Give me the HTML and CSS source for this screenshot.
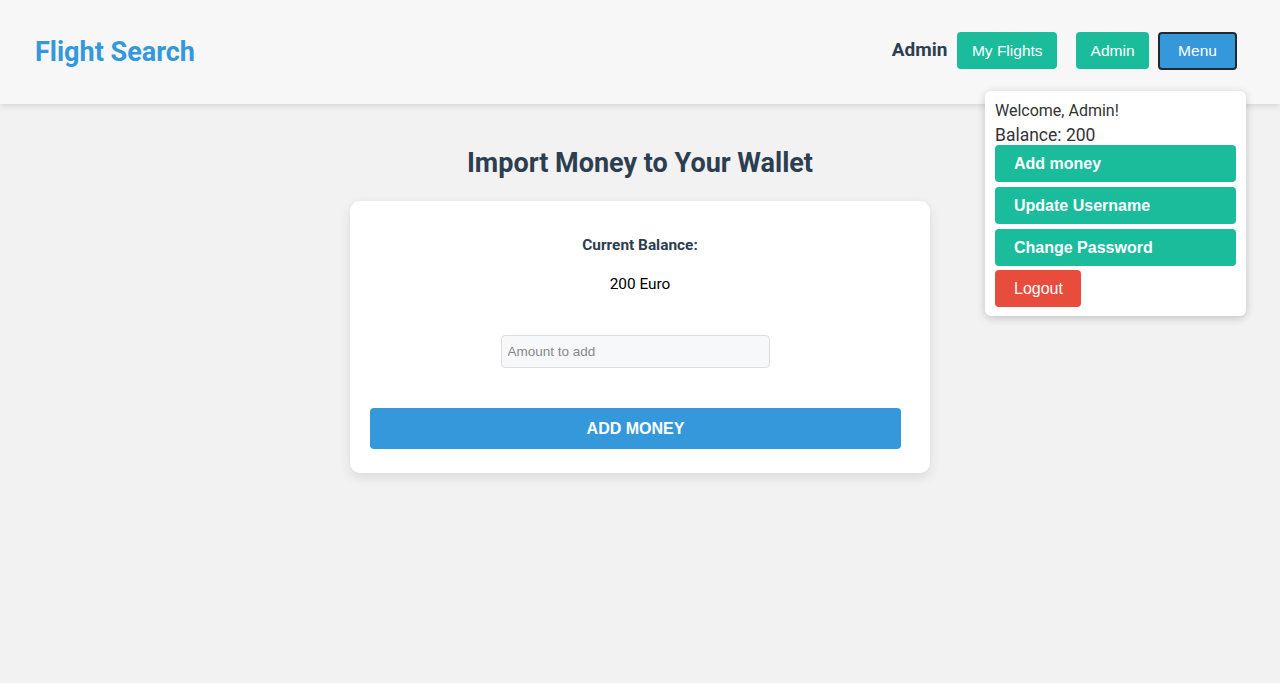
FILE: index.html
```html
<!DOCTYPE html>
<html>
<head>
<meta charset="utf-8">
<link rel="stylesheet" href="styles.css">
</head>
<body>
<header class="topbar">
  <div class="brand">Flight Search</div>
  <nav class="nav">
    <span class="nav-user">Admin</span>
    <button class="btn btn-green">My Flights</button>
    <button class="btn btn-green btn-admin">Admin</button>
    <button class="btn btn-menu">Menu</button>
  </nav>
  <div class="dropdown">
    <div class="dd-welcome">Welcome, Admin!</div>
    <div class="dd-balance">Balance: 200</div>
    <button class="dd-btn">Add money</button>
    <button class="dd-btn">Update Username</button>
    <button class="dd-btn">Change Password</button>
    <button class="dd-logout">Logout</button>
  </div>
</header>
<main class="main">
  <h1 class="title">Import Money to Your Wallet</h1>
  <section class="card">
    <div class="bal-label">Current Balance:</div>
    <div class="bal-value">200 Euro</div>
    <input class="amount" type="text" placeholder="Amount to add">
    <button class="add-btn">ADD MONEY</button>
  </section>
</main>
</body>
</html>
```
FILE: styles.css
```css
* { box-sizing: border-box; }
html, body { margin: 0; padding: 0; }
body {
  background: #f2f2f2;
  font-family: Roboto, "Liberation Sans", sans-serif;
  height: 683px;
  overflow: hidden;
}
.topbar {
  position: relative;
  height: 104px;
  background: #f7f7f7;
  box-shadow: 0 2px 6px rgba(0,0,0,0.12);
  display: flex;
  align-items: center;
  justify-content: space-between;
  padding: 0 43px 0 35px;
}
.brand {
  color: #3498db;
  font-weight: 700;
  font-size: 27px;
}
.nav {
  display: flex;
  align-items: center;
  margin-top: -3px;
}
.nav-user {
  font-weight: 700;
  font-size: 19px;
  color: #2c3e50;
  margin-right: 10px;
  margin-top: -2px;
}
.btn {
  font-family: "Liberation Sans", Arial, sans-serif;
  font-size: 15.5px;
  color: #fff;
  border: none;
  border-radius: 4px;
  height: 37px;
  padding: 0 14.5px;
}
.btn-green { background: #1abc9c; }
.btn-admin { margin-left: 19px; }
.btn-menu {
  margin-left: 9px;
  width: 79px;
  height: 38px;
  background: #3498db;
  border: 2px solid #1f2a33;
}
.dropdown {
  position: absolute;
  top: 91px;
  right: 34px;
  width: 261px;
  background: #fff;
  border-radius: 6px;
  box-shadow: 0 2px 8px rgba(0,0,0,0.2);
  padding: 10px 10px 9px;
  display: flex;
  flex-direction: column;
  z-index: 10;
}
.dd-welcome {
  font-size: 16px;
  color: #333;
  line-height: 20px;
}
.dd-balance {
  font-size: 17.5px;
  color: #333;
  line-height: 26px;
  margin-top: 1px;
  margin-bottom: -3px;
}
.dd-btn, .dd-logout {
  font-family: "Liberation Sans", Arial, sans-serif;
  font-size: 16px;
  color: #fff;
  border: none;
  border-radius: 4px;
  height: 37px;
  padding: 0 19px;
  text-align: left;
  margin-bottom: 5px;
}
.dd-btn {
  background: #1abc9c;
  font-weight: 700;
  width: 100%;
}
.dd-logout {
  background: #e74c3c;
  align-self: flex-start;
  width: 86px;
  margin-top: -1px;
  margin-bottom: 0;
}
.main {
  display: flex;
  flex-direction: column;
  align-items: center;
}
.title {
  margin: 42px 0 21px;
  font-size: 27px;
  font-weight: 700;
  color: #2c3e50;
  line-height: 34px;
}
.card {
  width: 580px;
  background: #fff;
  border-radius: 10px;
  box-shadow: 0 4px 12px rgba(0,0,0,0.1);
  padding: 35px 20px 24px;
  display: flex;
  flex-direction: column;
  align-items: center;
}
.bal-label {
  font-weight: 700;
  font-size: 15.4px;
  color: #2c3e50;
  line-height: 18px;
}
.bal-value {
  font-size: 15.4px;
  color: #000;
  margin-top: 21px;
  line-height: 18px;
}
.amount {
  margin-top: 42px;
  margin-right: 10px;
  width: 269px;
  height: 33px;
  background: #f7f8fa;
  border: 1px solid #ddd;
  border-radius: 4px;
  padding: 0 6px;
  font-family: "Liberation Sans", Arial, sans-serif;
  font-size: 13.5px;
}
.amount::placeholder { color: #888; }
.add-btn {
  margin-top: 40px;
  align-self: flex-start;
  width: 531px;
  height: 41px;
  background: #3498db;
  color: #fff;
  border: none;
  border-radius: 4px;
  font-family: "Liberation Sans", Arial, sans-serif;
  font-weight: 700;
  font-size: 16px;
}
```
